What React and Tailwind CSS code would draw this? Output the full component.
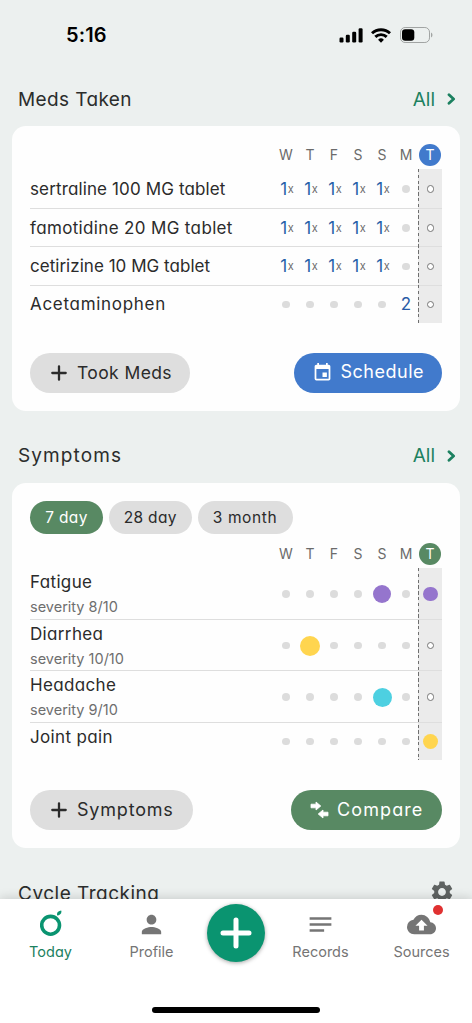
import { MdBackup, MdEvent, MdNotes, MdPerson, MdSettings } from "react-icons/md";

const DAYS = ["W", "T", "F", "S", "S", "M"];

const MEDS = [
  { name: "sertraline 100 MG tablet", style: "tracking-[0.13px]", row: "h-[40px]", days: ["1x", "1x", "1x", "1x", "1x", ""] },
  { name: "famotidine 20 MG tablet", style: "tracking-[0.35px]", row: "h-[38px]", days: ["1x", "1x", "1x", "1x", "1x", ""] },
  { name: "cetirizine 10 MG tablet", style: "tracking-[0.03px]", row: "h-[38.5px]", days: ["1x", "1x", "1x", "1x", "1x", ""] },
  { name: "Acetaminophen", style: "tracking-[0.7px]", row: "h-[37.5px]", days: ["", "", "", "", "", "2"] },
];

const SYMPTOMS = [
  { name: "Fatigue", severity: "severity 8/10", days: ["", "", "", "", "purple", ""], today: "purple" },
  { name: "Diarrhea", severity: "severity 10/10", days: ["", "yellow", "", "", "", ""], today: "" },
  { name: "Headache", severity: "severity 9/10", days: ["", "", "", "", "cyan", ""], today: "" },
  { name: "Joint pain", severity: "", days: ["", "", "", "", "", ""], today: "yellow" },
];

const DOTS = {
  purple: "size-[18px] bg-[#9575cd]",
  yellow: "size-[20px] bg-[#ffd54f]",
  cyan: "size-[19px] bg-[#4dd0e1]",
};

const TODAY_DOTS = {
  purple: "bg-[#9575cd]",
  yellow: "bg-[#ffd54f]",
};

function StatusBar() {
  return (
    <div className="flex h-[70px] shrink-0 items-center justify-between pl-[66px] pr-[39px] text-black">
      <span className="text-[20px] font-semibold leading-none tracking-[0.1px]">5:16</span>
      <div className="flex items-center">
        <svg className="h-[15px] w-6" viewBox="0 0 24 15">
          <rect x="0.5" y="9.5" width="4" height="5" rx="1.2" />
          <rect x="6.8" y="6.8" width="4" height="7.7" rx="1.2" />
          <rect x="13.2" y="3.8" width="4" height="10.7" rx="1.2" />
          <rect x="19.6" y="0.3" width="4" height="14.2" rx="1.2" />
        </svg>
        <svg className="ml-2 h-[15px] w-5" viewBox="0 0 20 15" fill="none" stroke="black" strokeWidth="2.9">
          <path d="M1 5.3a13 13 0 0 1 18 0" />
          <path d="M4.3 8.9a8.2 8.2 0 0 1 11.4 0" />
          <path d="M10 14.7l-2.9-3a4.1 4.1 0 0 1 5.8 0z" fill="black" stroke="none" />
        </svg>
        <svg className="ml-[9px] h-4 w-[33px]" viewBox="0 0 33 16">
          <rect x="0.5" y="0.5" width="29" height="15" rx="4.6" fill="none" stroke="#a1a4a3" />
          <rect x="2" y="2.2" width="12.3" height="11.6" rx="3.2" />
          <path d="M31 5.5c2 1 2 4 0 5z" fill="#a1a4a3" />
        </svg>
      </div>
    </div>
  );
}

function SectionHeader({ title, style }) {
  return (
    <div className={`flex h-14 shrink-0 items-center justify-between pl-[18px] pr-[16px] ${style}`}>
      <h2 className="text-[19px] leading-none text-[#2b2d2c]">{title}</h2>
      <div className="flex items-center tracking-normal text-[#1c8160]">
        <span className="text-[19px] leading-none">All</span>
        <svg className="ml-3 h-3 w-[9px]" viewBox="0 0 9 12" fill="none" stroke="currentColor" strokeWidth="2.8" strokeLinecap="round" strokeLinejoin="round">
          <path d="M2 1.8L6.6 6 2 10.2" />
        </svg>
      </div>
    </div>
  );
}

function DayHeader({ color }) {
  return (
    <div className="flex justify-end text-[14px] leading-none text-[#6b6b6b]">
      {DAYS.map((day, i) => (
        <span key={i} className="flex h-[22px] w-6 items-center justify-center">
          {day}
        </span>
      ))}
      <span className={`ml-[1px] mr-[1px] flex size-[22px] items-center justify-center rounded-full text-white ${color}`}>T</span>
    </div>
  );
}

function TodayCell({ dot }) {
  return (
    <div className="flex w-6 items-center justify-center self-stretch bg-[#ebebeb]">
      {dot ? (
        <span className={`ml-[1px] size-[14.5px] rounded-full ${TODAY_DOTS[dot]}`} />
      ) : (
        <span className="ml-[1px] size-[7.5px] rounded-full border-[1.3px] border-[#757575] bg-white" />
      )}
    </div>
  );
}

// dashed rule between yesterday and today
function TodayRule() {
  return (
    <div className="absolute bottom-0 right-[23px] top-0 w-px bg-[repeating-linear-gradient(to_bottom,#6f6f6f_0_3.4px,transparent_3.4px_5.8px)]" />
  );
}

function DayCell({ value }) {
  return (
    <div className="flex w-6 items-center justify-center">
      {value === "" && <span className="size-[7.5px] rounded-full bg-[#dcdcdc]" />}
      {value === "1x" && (
        <span className="ml-[2px] flex items-center leading-none">
          <span className="text-[17px] text-[#2660a8]">1</span>
          <span className="ml-[0.5px] text-[11px] text-[#6b6b6b]">x</span>
        </span>
      )}
      {value === "2" && <span className="text-[17px] leading-none text-[#2a5ba6]">2</span>}
      {DOTS[value] && <span className={`rounded-full ${DOTS[value]}`} />}
    </div>
  );
}

function PlusIcon() {
  return (
    <svg className="mt-[1px] size-4" viewBox="0 0 16 16" fill="none" stroke="currentColor" strokeWidth="2.3" strokeLinecap="round">
      <path d="M8 1.3v13.4M1.3 8h13.4" />
    </svg>
  );
}

function MedsCard() {
  return (
    <section className="mx-3 h-[285px] shrink-0 rounded-[14px] bg-[#fefefe] px-[18px] pt-[18px]">
      <DayHeader color="bg-[#417acc]" />
      <div className="relative mt-[3px]">
        {MEDS.map((med, i) => (
          <div
            key={med.name}
            className={`relative flex items-center ${med.row} ${i < MEDS.length - 1 ? "after:absolute after:inset-x-0 after:bottom-0 after:h-px after:bg-[#dedede]" : ""}`}
          >
            <span className={`flex-1 whitespace-nowrap text-[17px] leading-none text-[#2b2b2b] ${med.style}`}>{med.name}</span>
            {med.days.map((value, d) => (
              <DayCell key={d} value={value} />
            ))}
            <TodayCell />
          </div>
        ))}
        <TodayRule />
      </div>
      <div className="mt-[30px] flex justify-between">
        <button className="flex h-[39.5px] w-40 items-center rounded-full bg-[#dedede] pl-[21px] text-[#2b2b2b]">
          <PlusIcon />
          <span className="-mt-[1px] ml-[10px] whitespace-nowrap text-[17.5px] leading-none tracking-[0.4px]">Took Meds</span>
        </button>
        <button className="flex h-[39.5px] w-[148.5px] items-center rounded-full bg-[#417acc] pl-[18px] text-white">
          <MdEvent className="size-[21px]" />
          <span className="-mt-[1px] ml-[8px] whitespace-nowrap text-[18px] leading-none tracking-[0.5px]">Schedule</span>
        </button>
      </div>
    </section>
  );
}

function SymptomsCard() {
  return (
    <section className="mx-3 h-[365px] shrink-0 rounded-[14px] bg-[#fefefe] px-[18px] pt-[18px]">
      <div className="flex gap-[6px] text-[15.5px] leading-none tracking-[0.3px] text-[#2b2b2b]">
        <button className="h-[33px] w-[73px] rounded-full bg-[#588963] text-white">7 day</button>
        <button className="h-[33px] w-[82.5px] rounded-full bg-[#dedede]">28 day</button>
        <button className="h-[33px] w-[95px] rounded-full bg-[#dedede] tracking-[0.6px]">3 month</button>
      </div>
      <div className="mt-[9px]">
        <DayHeader color="bg-[#588963]" />
      </div>
      <div className="relative mt-[3px]">
        {SYMPTOMS.map((item) => (
          <div
            key={item.name}
            className={`relative flex items-center ${item.severity ? "h-[51.7px] after:absolute after:inset-x-0 after:bottom-0 after:h-px after:bg-[#dedede]" : "h-[37px]"}`}
          >
            <div className="flex-1 self-start pt-[6px] leading-none">
              <p className="text-[17px] leading-[17px] tracking-[0.35px] text-[#2b2b2b]">{item.name}</p>
              {item.severity && <p className="mt-[8px] whitespace-nowrap text-[14.5px] leading-[15px] text-[#6e6e6e]">{item.severity}</p>}
            </div>
            {item.days.map((value, d) => (
              <DayCell key={d} value={value} />
            ))}
            <TodayCell dot={item.today} />
          </div>
        ))}
        <TodayRule />
      </div>
      <div className="mt-[30px] flex justify-between">
        <button className="flex h-[39.5px] w-[162.5px] items-center rounded-full bg-[#dedede] pl-[21px] text-[#2b2b2b]">
          <PlusIcon />
          <span className="ml-[10px] whitespace-nowrap text-[18px] leading-none tracking-[0.8px]">Symptoms</span>
        </button>
        <button className="flex h-[39.5px] w-[151px] items-center rounded-full bg-[#588963] pl-[19px] text-white">
          <svg className="h-[18px] w-[19px]" viewBox="0 0 19 18" fill="currentColor" stroke="currentColor" strokeWidth="0.8" strokeLinejoin="round">
            <path d="M1 3.2h5V1l4.8 4L6 9V6.8H1z" />
            <path d="M18 11.2h-5V9l-4.8 4 4.8 4v-2.2h5z" />
          </svg>
          <span className="ml-[8px] whitespace-nowrap text-[18px] leading-none tracking-[1.1px]">Compare</span>
        </button>
      </div>
    </section>
  );
}

function NavItem({ label, active, children }) {
  return (
    <div className={`flex w-[101px] flex-col items-center ${active ? "text-[#1c8160]" : "text-[#757575]"}`}>
      <div className="flex h-[30px] items-center justify-center">{children}</div>
      <span className="mt-[5px] text-[14.5px] leading-[16px]">{label}</span>
    </div>
  );
}

function BottomNav() {
  return (
    <nav className="relative z-10 flex h-[124px] shrink-0 flex-col justify-between bg-white pb-[10px] shadow-[0_-1px_10px_rgba(0,0,0,0.16)]">
      <div className="flex pt-[10px]">
        <NavItem label="Today" active>
          <svg className="-mt-[3px] h-[26px] w-[22px]" viewBox="0 0 22 26">
            <circle cx="10.6" cy="15.3" r="8.9" fill="none" stroke="#0a9470" strokeWidth="3.6" />
            <path d="M17.2 5.4C16.4 2.8 18 0.8 21.2 0.4C22.2 3.2 20 5.4 17.2 5.4z" fill="#0a9470" />
          </svg>
        </NavItem>
        <NavItem label="Profile">
          <MdPerson className="size-[29px]" />
        </NavItem>
        <div className="flex w-[68px] justify-center">
          <button className="-mt-[5px] flex size-[58px] items-center justify-center rounded-full bg-[#0a9470] shadow-[0_1px_4px_rgba(0,0,0,0.35)]">
            <svg className="size-8" viewBox="0 0 32 32" stroke="white" strokeWidth="5" strokeLinecap="round">
              <path d="M16 3v26M3 16h26" />
            </svg>
          </button>
        </div>
        <NavItem label="Records">
          <MdNotes className="size-[29px]" />
        </NavItem>
        <NavItem label="Sources">
          <div className="relative">
            <MdBackup className="size-[29px]" />
            <span className="absolute -right-[7px] -top-[5px] size-[10px] rounded-full bg-[#e03131]" />
          </div>
        </NavItem>
      </div>
      <div className="mx-auto h-[6px] w-[168px] rounded-full bg-black" />
    </nav>
  );
}

function App() {
  return (
    <div className="flex h-[1023px] w-[472px] flex-col overflow-hidden bg-[#ecf0ef] font-['Inter',sans-serif] [font-feature-settings:'cv11']">
      <StatusBar />
      <SectionHeader title="Meds Taken" style="pt-[2px] tracking-[0.4px]" />
      <MedsCard />
      <div className="h-4 shrink-0" />
      <SectionHeader title="Symptoms" style="pt-[1px] tracking-[1.1px]" />
      <SymptomsCard />
      <div className="min-h-0 flex-1 overflow-hidden">
        <div className="mt-[33px] flex items-start justify-between pl-[18px] pr-[17px]">
          <h2 className="mt-[3px] text-[19px] leading-none tracking-[0.5px] text-[#2b2d2c]">Cycle Tracking</h2>
          <MdSettings className="-mt-[2px] size-[26px] text-[#5f6362]" />
        </div>
      </div>
      <BottomNav />
    </div>
  );
}

export default App;
